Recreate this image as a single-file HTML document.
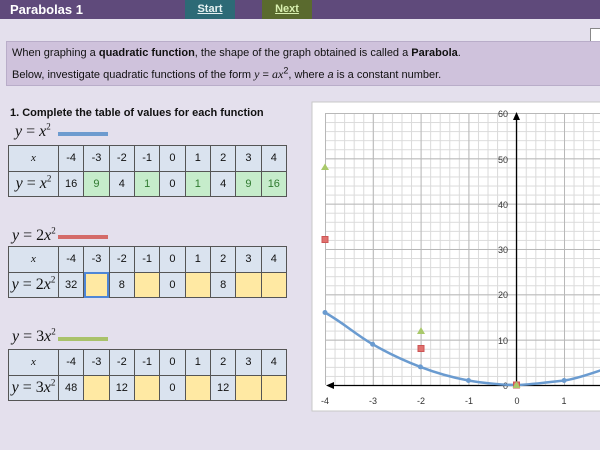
<!DOCTYPE html>
<html><head><meta charset="utf-8"><style>
*{margin:0;padding:0;box-sizing:border-box}
body{width:600px;height:450px;overflow:hidden;background:#e4e0ed;font-family:"Liberation Sans",sans-serif;position:relative;font-size:11px;color:#111}
.hdr{position:absolute;left:0;top:0;width:600px;height:19px;background:#5f4a7b}
.hdr .t{position:absolute;left:10px;top:1px;color:#fff;font-weight:bold;font-size:13px;line-height:17px}
.btn{position:absolute;top:0;height:19px;width:50px;text-align:center;font-weight:bold;font-size:11px;text-decoration:underline;line-height:19px}
.info{position:absolute;left:6px;top:41px;width:600px;height:45px;background:#cfc2dc;border:1px solid #b9adc9;font-size:11px;padding:1px 0 0 5px;line-height:21px}
.m{font-family:"Liberation Serif",serif;font-style:italic;font-size:12px}
.sq{position:absolute;left:10px;top:107px;font-weight:bold;font-size:11px}
table{position:absolute;left:8px;border-collapse:collapse;table-layout:fixed;width:279px}
td{border:1px solid #555;background:#dae3ef;text-align:center;font-size:11px;height:25.5px;padding:0}
td.f{width:50px;font-family:"Liberation Serif",serif;font-size:16px;white-space:nowrap}
td.x{font-family:"Liberation Serif",serif;font-style:italic;font-size:11px}
td.g{background:#c6eccb;color:#2f7a2f}
td.y{background:#ffe9a3}
.lab{position:absolute;font-family:"Liberation Serif",serif;font-size:16px}
.line{position:absolute;height:4px}
sup{font-size:9px;line-height:0}
</style></head><body>
<div class="hdr"><div class="t">Parabolas 1</div>
<div class="btn" style="left:185px;background:#2d6a76;color:#e6f2f2">Start</div>
<div class="btn" style="left:262px;background:#5a6a2e;color:#d9f0b0">Next</div></div>
<div style="position:absolute;left:590px;top:28px;width:12px;height:14px;background:#fff;border:1px solid #888"></div>
<div class="info">When graphing a <b>quadratic function</b>, the shape of the graph obtained is called a <b>Parabola</b>.<br>Below, investigate quadratic functions of the form <span class="m">y</span> = <span class="m">ax</span><sup>2</sup>, where <i>a</i> is a constant number.</div>
<div class="sq">1. Complete the table of values for each function</div>

<div class="lab" style="left:15px;top:123px"><i>y</i> = <i>x</i><sup>2</sup></div>
<div class="line" style="left:58px;top:132px;width:50px;background:#6d9bcf"></div>
<table style="top:145px"><tr><td class="f x">x</td><td>-4</td><td>-3</td><td>-2</td><td>-1</td><td>0</td><td>1</td><td>2</td><td>3</td><td>4</td></tr>
<tr><td class="f"><i>y</i> = <i>x</i><sup>2</sup></td><td>16</td><td class="g">9</td><td>4</td><td class="g">1</td><td>0</td><td class="g">1</td><td>4</td><td class="g">9</td><td class="g">16</td></tr></table>

<div class="lab" style="left:12px;top:227px"><i>y</i> = 2<i>x</i><sup>2</sup></div>
<div class="line" style="left:58px;top:235px;width:50px;background:#d46b69"></div>
<table style="top:246px"><tr><td class="f x">x</td><td>-4</td><td>-3</td><td>-2</td><td>-1</td><td>0</td><td>1</td><td>2</td><td>3</td><td>4</td></tr>
<tr><td class="f"><i>y</i> = 2<i>x</i><sup>2</sup></td><td>32</td><td class="y" style="outline:2px solid #4f86d6;outline-offset:-2px"></td><td>8</td><td class="y"></td><td>0</td><td class="y"></td><td>8</td><td class="y"></td><td class="y"></td></tr></table>

<div class="lab" style="left:12px;top:328px"><i>y</i> = 3<i>x</i><sup>2</sup></div>
<div class="line" style="left:58px;top:337px;width:50px;background:#a9c26a"></div>
<table style="top:349px"><tr><td class="f x">x</td><td>-4</td><td>-3</td><td>-2</td><td>-1</td><td>0</td><td>1</td><td>2</td><td>3</td><td>4</td></tr>
<tr><td class="f"><i>y</i> = 3<i>x</i><sup>2</sup></td><td>48</td><td class="y"></td><td>12</td><td class="y"></td><td>0</td><td class="y"></td><td>12</td><td class="y"></td><td class="y"></td></tr></table>

<svg style="position:absolute;left:0;top:0" width="600" height="450">
<defs>
<pattern id="mv" x="325" y="0" width="9.56" height="450" patternUnits="userSpaceOnUse"><line x1="0.5" y1="0" x2="0.5" y2="450" stroke="#dadada" stroke-width="1"/></pattern>
<pattern id="mh" x="0" y="113" width="600" height="9.067" patternUnits="userSpaceOnUse"><line x1="0" y1="0.5" x2="600" y2="0.5" stroke="#dadada" stroke-width="1"/></pattern>
<pattern id="Mv" x="325" y="0" width="47.8" height="450" patternUnits="userSpaceOnUse"><line x1="0.5" y1="0" x2="0.5" y2="450" stroke="#b8b8b8" stroke-width="1"/></pattern>
<pattern id="Mh" x="0" y="113" width="600" height="45.33" patternUnits="userSpaceOnUse"><line x1="0" y1="0.5" x2="600" y2="0.5" stroke="#b8b8b8" stroke-width="1"/></pattern>
</defs>
<rect x="312" y="102" width="300" height="309" fill="#fff" stroke="#c8c8c8"/>
<rect x="325" y="113" width="275" height="272" fill="url(#mv)"/>
<rect x="325" y="113" width="275" height="272" fill="url(#mh)"/>
<rect x="325" y="113" width="275" height="272" fill="url(#Mv)"/>
<rect x="325" y="113" width="275" height="272" fill="url(#Mh)"/>
<line x1="516.5" y1="116" x2="516.5" y2="386" stroke="#000" stroke-width="1.3"/>
<polygon points="516.5,112 513,120 520,120" fill="#000"/>
<line x1="330" y1="385.5" x2="600" y2="385.5" stroke="#000" stroke-width="1.3"/>
<polygon points="326,385.5 334,382 334,389" fill="#000"/>
<g font-size="9" fill="#333" text-anchor="end">
<text x="508" y="117">60</text><text x="508" y="163">50</text><text x="508" y="208">40</text><text x="508" y="253">30</text><text x="508" y="298">20</text><text x="508" y="344">10</text><text x="508" y="389">0</text></g>
<g font-size="9" fill="#333" text-anchor="middle">
<text x="325" y="404">-4</text><text x="373" y="404">-3</text><text x="421" y="404">-2</text><text x="469" y="404">-1</text><text x="517" y="404">0</text><text x="564" y="404">1</text></g>
<path d="M325,312.5 C345,324 355,334 372.6,344.2 S405,361 420.4,366.9 S455,378 468.5,380.5 S505,385 516.3,385 S550,382 564.1,380.5 S600,370 612,366.9" fill="none" stroke="#6a9bd0" stroke-width="2.5"/>
<g fill="#6a9bd0"><circle cx="325" cy="312.5" r="2.5"/><circle cx="372.6" cy="344.2" r="2.5"/><circle cx="420.4" cy="366.9" r="2.5"/><circle cx="468.5" cy="380.5" r="2.5"/><circle cx="564.1" cy="380.5" r="2.5"/></g>
<g fill="#e0716e" stroke="#c55"><rect x="322" y="236.5" width="6" height="6"/><rect x="418" y="345.5" width="6" height="6"/><rect x="513.5" y="382" width="6" height="6"/></g>
<g fill="#a9c96a"><polygon points="325,163.5 321,170 329,170"/><polygon points="421,327 417,334 425,334"/><polygon points="516.5,381 512.5,388 520.5,388"/></g>
</svg>
</body></html>
